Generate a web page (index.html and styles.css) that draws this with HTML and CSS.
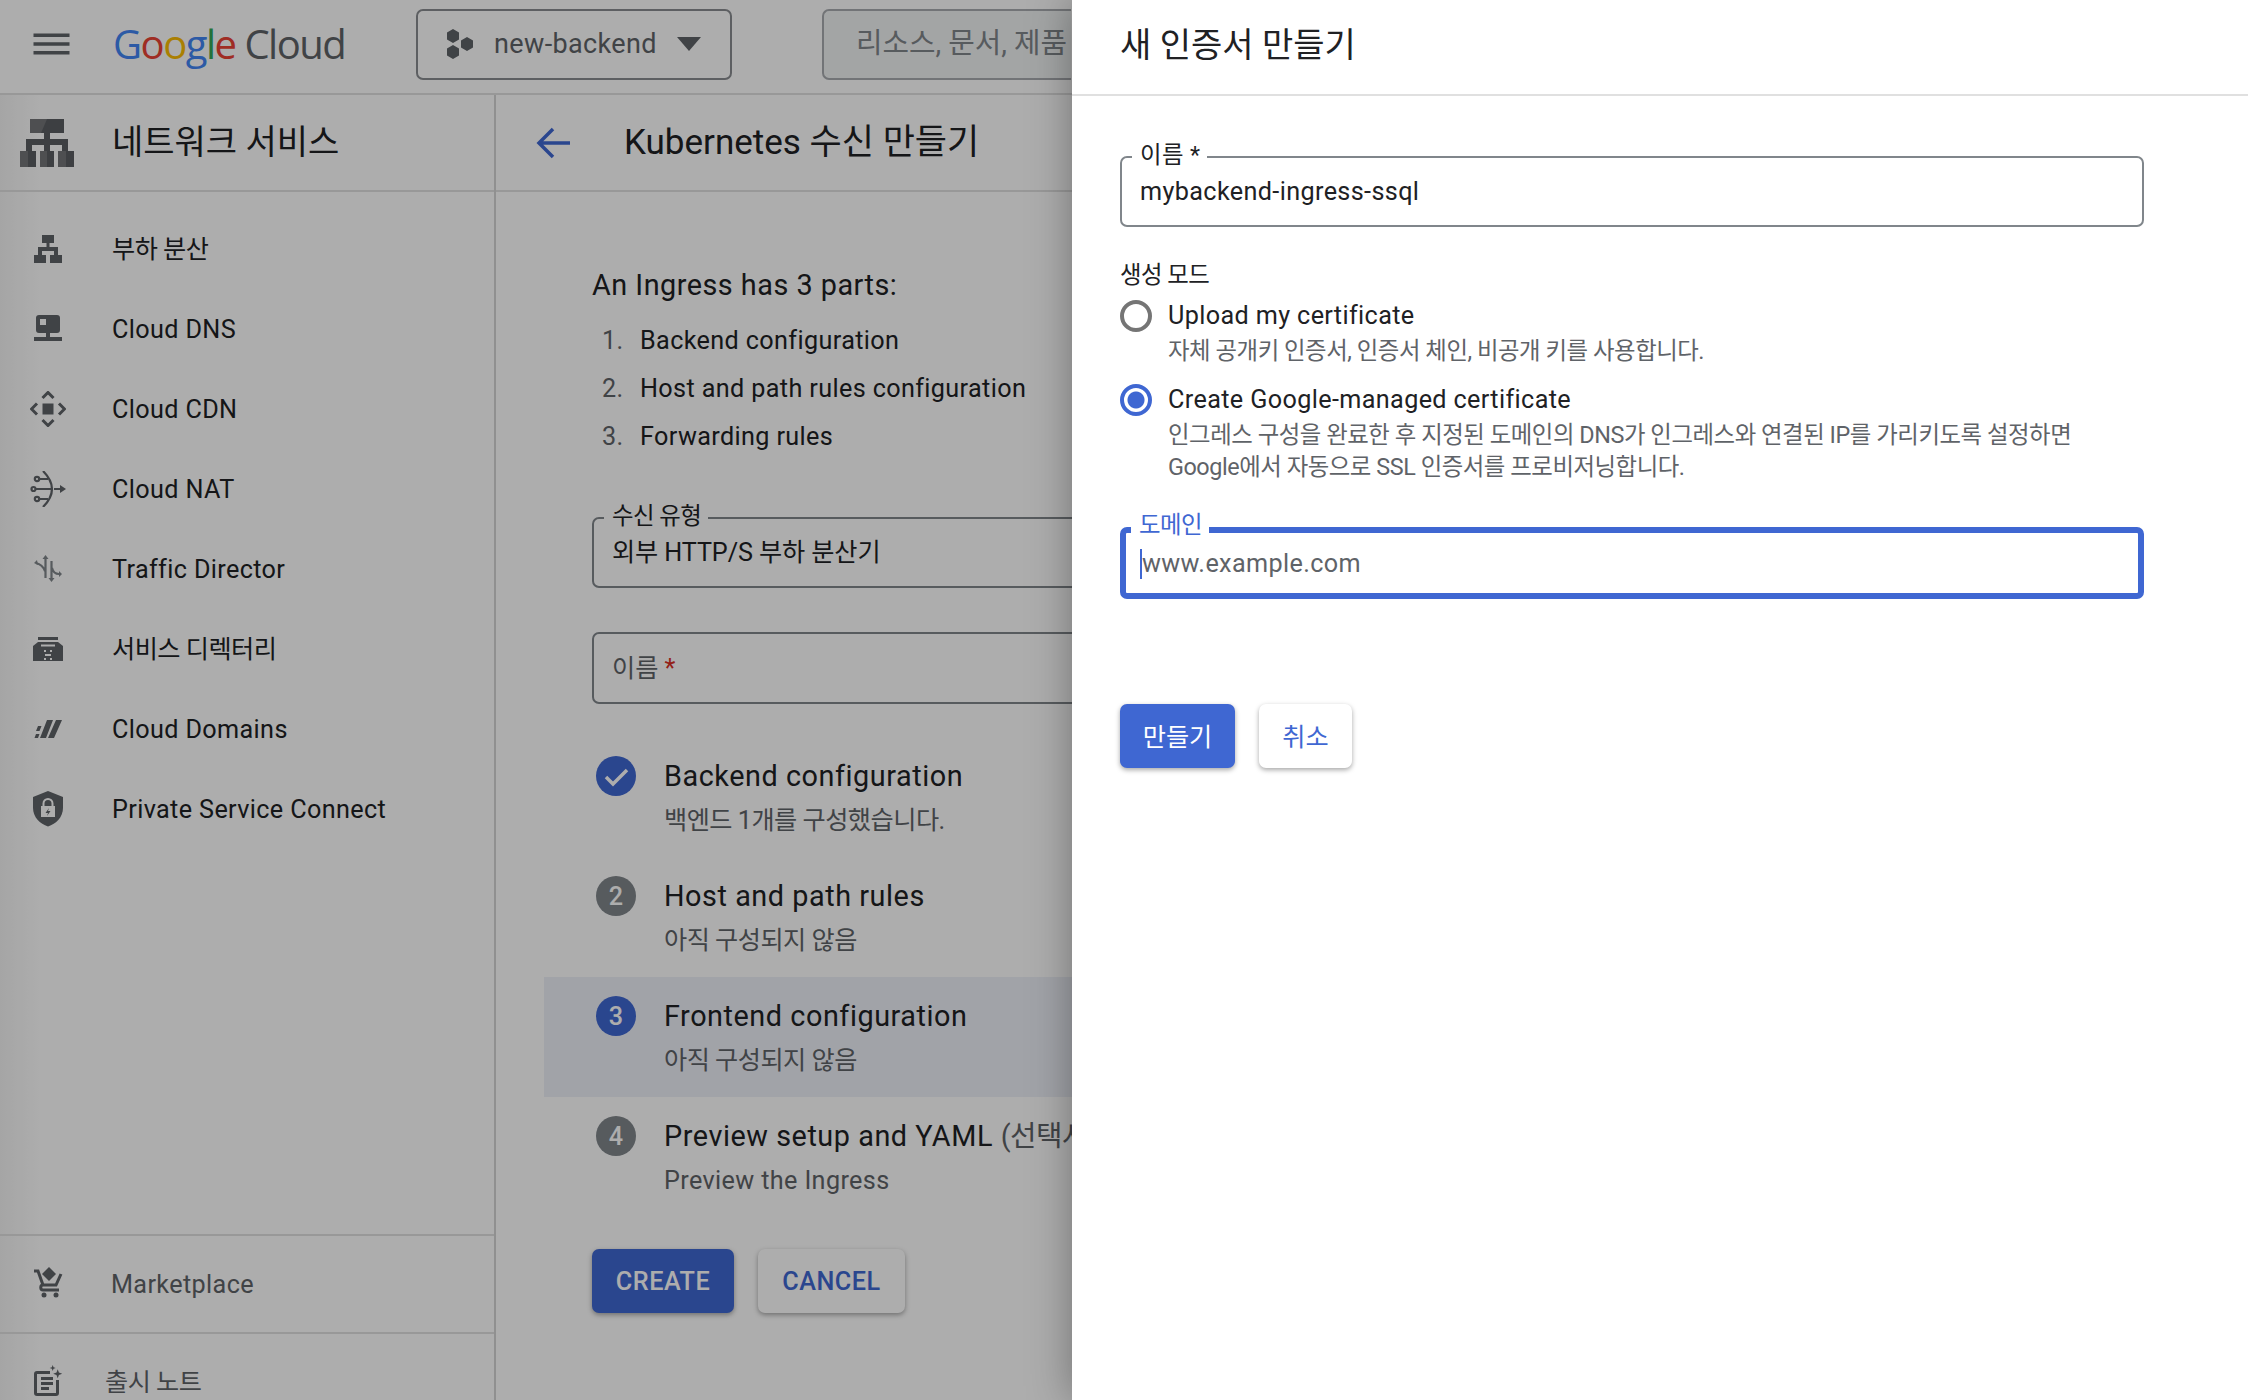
FILE: index.html
```html
<!DOCTYPE html>
<html lang="ko">
<head>
  <meta charset="UTF-8">
  <title>Kubernetes 수신 만들기</title>
  <link rel="stylesheet" href="styles.css">
</head>
<body>
  <div class="app">
    <header class="topbar">
      <svg class="menu-icon" viewBox="0 0 36 24"><path d="M0 1.500h36v3.400H0zM0 10.300h36v3.400H0zM0 19.100h36v3.400H0z"/></svg>
      <div class="logo"><span class="g-blue">G</span><span class="g-red">o</span><span class="g-yellow">o</span><span class="g-blue">g</span><span class="g-green">l</span><span class="g-red">e</span> <span class="logo-cloud">Cloud</span></div>
      <div class="project">
        <svg class="project-icon" viewBox="0 0 28 30"><path d="M7 0l6 3.500v7L7 14l-6-3.500v-7zM7 16l6 3.500v7L7 30l-6-3.500v-7zM21 8l6 3.500v7L21 22l-6-3.500v-7z"/></svg>
        <span>new-backend</span>
        <svg class="caret-down" viewBox="0 0 24 14"><path d="M0 0h24L12 14z"/></svg>
      </div>
      <div class="search">리소스, 문서, 제품</div>
    </header>

    <div class="workspace">
      <aside class="sidebar">
        <div class="sidebar-title">
          <svg class="title-icon" viewBox="0 0 54 48">
            <path class="tone-light" d="M10 0h17v14H10zM0 32h8v16H0zM20 32h7v16h-7zM38 32h8v16h-8z"/>
            <path class="tone-dark" d="M27 0h17v14H30v6h18v12h-6v-6H30v6h-6v-6H12v6H6V20h18v-6h-3zM8 32h8v16H8zM27 32h7v16h-7zM46 32h8v16h-8z"/>
          </svg>
          <span>네트워크 서비스</span>
        </div>
        <nav class="nav">
          <a class="nav-item">
            <svg class="nav-icon" viewBox="-4 -4 36 36"><path d="M8 0h12v8h-4.500v4H24v8h4v8H16v-8h4v-4H8v4h4v8H0v-8h4v-8h8.500V8H8z"/></svg>
            <span class="ko">부하 분산</span>
          </a>
          <a class="nav-item">
            <svg class="nav-icon" viewBox="-4 -2 36 36"><path d="M5 2h18a3 3 0 0 1 3 3v12a3 3 0 0 1-3 3h-7v4h12v4H0v-4h12v-4H5a3 3 0 0 1-3-3V5a3 3 0 0 1 3-3zm1 4v6h6V6z" fill-rule="evenodd"/></svg>
            <span>Cloud DNS</span>
          </a>
          <a class="nav-item">
            <svg class="nav-icon" viewBox="0 0 36 36"><path d="M12.500 12.500h11v11h-11z"/><path class="line line-heavy" d="M12.500 7L18 1.500 23.500 7M12.500 29l5.500 5.500 5.500-5.500M7 12.500L1.500 18 7 23.500M29 12.500l5.500 5.500-5.500 5.500"/></svg>
            <span>Cloud CDN</span>
          </a>
          <a class="nav-item">
            <svg class="nav-icon" viewBox="0 0 36 36"><path class="line" d="M13 0Q31 18 13 36M9.500 8H18M5.500 18H22M9.500 28H18M24 18h8"/><circle class="line" cx="7" cy="8" r="2.200"/><circle class="line" cx="3.500" cy="18" r="2"/><circle class="line" cx="7" cy="28" r="2.200"/><path d="M30 14l6 4-6 4z"/></svg>
            <span>Cloud NAT</span>
          </a>
          <a class="nav-item">
            <svg class="nav-icon nav-icon-soft" viewBox="-4 -4 36 36"><path class="line" d="M11.500 3v20M17.500 6v18M11 16C9 11 6 9 2 8M18 13c1 4 4 6 7 6"/><path d="M8.500 4l3-4 3 4zM14.500 23l3 4 3-4zM0 8l3-3 1 5zM25 16l3 3-3 3z"/></svg>
            <span>Traffic Director</span>
          </a>
          <a class="nav-item">
            <svg class="nav-icon" viewBox="-3 -6 36 36"><path d="M5 0h20v3H5zM5 5h20l5 4v15H0V9z"/><path class="cut" d="M8 8.500h14M11 14h2M17 14h2M12 18h6M11 22h2M17 22h2"/></svg>
            <span class="ko">서비스 디렉터리</span>
          </a>
          <a class="nav-item">
            <svg class="nav-icon" viewBox="0 0 36 36"><path d="M17 9h6l-7 18h-6zM26 9h6l-8 18h-6zM8 15h3.500L9.500 20H6zM6 23h3.500L8 27H4.500z"/></svg>
            <span>Cloud Domains</span>
          </a>
          <a class="nav-item">
            <svg class="nav-icon" viewBox="0 0 36 36"><path d="M18 0l15 6v11c0 9-7 16-15 18.500C10 33 3 26 3 17V6z"/><path class="cut-fill" d="M11 15h14v11H11z"/><path class="cut" d="M13.500 15v-2.500a4.500 4.500 0 0 1 9 0V15"/><path d="M19 17l-3.500 5H18l-1 3 3.500-5H18z"/></svg>
            <span>Private Service Connect</span>
          </a>
        </nav>
        <div class="sidebar-foot">
          <a class="foot-item">
            <svg class="nav-icon" viewBox="0 0 36 36"><path d="M19 1l7 7-7 7-7-7z"/><path class="line line-heavy" d="M4 5h4l5 14h13l5-11M13 19c-3 0-3 5 0 5h16"/><circle cx="14" cy="29" r="2.500"/><circle cx="26" cy="29" r="2.500"/></svg>
            <span>Marketplace</span>
          </a>
          <a class="foot-item foot-release">
            <svg class="nav-icon" viewBox="0 0 36 36"><path class="line line-heavy" d="M20 8.500H7A1.500 1.500 0 0 0 5.500 10v19A1.500 1.500 0 0 0 7 30.500h19a1.500 1.500 0 0 0 1.500-1.500V16"/><path d="M11 13h12v3H11zM11 18h12v3H11zM11 23h8v3h-8zM27.700 5.200l1.200 3.300 3.300 1.200-3.300 1.200-1.200 3.300-1.200-3.300-3.300-1.200 3.300-1.200zM22.700 1l.8 2.200 2.200.8-2.200.8-.8 2.200-.8-2.200-2.200-.8 2.200-.8z"/></svg>
            <span class="ko">출시 노트</span>
          </a>
        </div>
      </aside>

      <main class="main">
        <div class="page-title">
          <svg class="back-icon" viewBox="0 0 34 32"><path d="M17 2L3 16l14 14M3 16h31"/></svg>
          <h1>Kubernetes 수신 만들기</h1>
        </div>
        <div class="content">
          <p class="intro">An Ingress has 3 parts:</p>
          <ol class="parts">
            <li>Backend configuration</li>
            <li>Host and path rules configuration</li>
            <li>Forwarding rules</li>
          </ol>

          <div class="field field-type">
            <label class="field-label ko">수신 유형</label>
            <div class="field-value field-mixed">외부 HTTP/S 부하 분산기</div>
          </div>
          <div class="field field-name">
            <div class="field-value field-muted">이름 <span class="required">*</span></div>
          </div>

          <div class="steps">
            <div class="step">
              <svg class="step-badge" viewBox="0 0 40 40"><circle cx="20" cy="20" r="20" fill="#3f67d2"/><path d="M10 21l7 7 14-14" fill="none" stroke="#fff" stroke-width="3.500"/></svg>
              <div>
                <div class="step-title">Backend configuration</div>
                <div class="step-sub ko">백엔드 1개를 구성했습니다.</div>
              </div>
            </div>
            <div class="step">
              <span class="step-badge step-num">2</span>
              <div>
                <div class="step-title">Host and path rules</div>
                <div class="step-sub ko">아직 구성되지 않음</div>
              </div>
            </div>
            <div class="step step-active">
              <span class="step-badge step-num step-num-active">3</span>
              <div>
                <div class="step-title">Frontend configuration</div>
                <div class="step-sub ko">아직 구성되지 않음</div>
              </div>
            </div>
            <div class="step">
              <span class="step-badge step-num">4</span>
              <div>
                <div class="step-title">Preview setup and YAML <span class="optional ko">(선택사항)</span></div>
                <div class="step-sub">Preview the Ingress</div>
              </div>
            </div>
          </div>

          <div class="actions">
            <button class="btn btn-primary btn-create">CREATE</button>
            <button class="btn btn-plain btn-cancel">CANCEL</button>
          </div>
        </div>
      </main>
    </div>

    <div class="backdrop"></div>

    <section class="panel">
      <div class="panel-head">새 인증서 만들기</div>
      <div class="panel-body">
        <div class="field field-cert">
          <label class="field-label">이름 *</label>
          <div class="field-value">mybackend-ingress-ssql</div>
        </div>

        <div class="group-label ko">생성 모드</div>
        <div class="radio-row">
          <span class="radio"></span>
          <span class="radio-text">Upload my certificate</span>
          <p class="radio-desc">자체 공개키 인증서, 인증서 체인, 비공개 키를 사용합니다.</p>
        </div>
        <div class="radio-row radio-row-on">
          <span class="radio radio-on"></span>
          <span class="radio-text">Create Google-managed certificate</span>
          <p class="radio-desc">인그레스 구성을 완료한 후 지정된 도메인의 DNS가 인그레스와 연결된 IP를 가리키도록 설정하면<br>Google에서 자동으로 SSL 인증서를 프로비저닝합니다.</p>
        </div>

        <div class="field field-focus">
          <label class="field-label ko">도메인</label>
          <div class="field-value"><span class="placeholder">www.example.com</span></div>
        </div>

        <div class="actions panel-actions">
          <button class="btn btn-primary btn-make">만들기</button>
          <button class="btn btn-plain btn-abort">취소</button>
        </div>
      </div>
    </section>
  </div>
</body>
</html>
```

FILE: styles.css
```css
* {
  box-sizing: border-box;
}

html, body {
  margin: 0;
  height: 100%;
}

body {
  font-family: Roboto, "Noto Sans CJK KR", sans-serif;
  font-size: 25.2px;
  line-height: 40px;
  letter-spacing: 0.37px;
  color: #202124;
  background: #fff;
}

.ko {
  letter-spacing: -0.5px;
}

.app {
  position: relative;
  width: 2248px;
  height: 1400px;
  overflow: hidden;
}

/* top bar */
.topbar {
  display: flex;
  align-items: center;
  height: 95px;
  border-bottom: 2px solid #e0e0e0;
  padding: 0 0 5px 33px;
}

.menu-icon {
  width: 37px;
  height: 24px;
  fill: #5f6368;
  margin-right: 44px;
}

.logo {
  width: 303px;
  margin-left: -1px;
  padding-left: 0;
  font-family: "Open Sans", sans-serif;
  font-size: 40px;
  line-height: 50px;
  letter-spacing: -1.5px;
  white-space: nowrap;
}

.g-blue { color: #4285f4; }
.g-red { color: #ea4335; }
.g-yellow { color: #fbbc04; }
.g-green { color: #34a853; }
.logo-cloud { color: #5f6368; }

.project {
  display: flex;
  align-items: center;
  width: 316px;
  height: 71px;
  border: 2px solid #8a8d91;
  border-radius: 7px;
  padding-left: 28px;
  font-size: 27px;
  color: #5f6368;
}

.project-icon {
  width: 28px;
  height: 30px;
  fill: #5f6368;
  margin-right: 20px;
}

.caret-down {
  width: 24px;
  height: 14px;
  fill: #5f6368;
  margin-left: 20px;
}

.search {
  width: 249px;
  height: 71px;
  margin-left: 90px;
  border: 2px solid #a9acb0;
  border-right: 0;
  border-radius: 7px 0 0 7px;
  background: #f1f3f4;
  padding-left: 32px;
  font-size: 28.8px;
  line-height: 65px;
  letter-spacing: 0;
  color: #80868b;
  white-space: nowrap;
  overflow: hidden;
}

.workspace {
  display: flex;
  height: 1305px;
}

/* left nav */
.sidebar {
  width: 496px;
  flex-shrink: 0;
  border-right: 2px solid #d5d5d5;
  background: linear-gradient(90deg, #f4f4f4, #fff 40px);
}

.sidebar-title {
  display: flex;
  align-items: center;
  height: 97px;
  border-bottom: 2px solid #e0e0e0;
  padding-left: 20px;
  font-size: 34px;
  letter-spacing: 0;
}

.sidebar-title span {
  padding-bottom: 2px;
}

.title-icon {
  width: 54px;
  height: 48px;
  margin-right: 38px;
}

.tone-light { fill: #737578; }
.tone-dark { fill: #5b5e62; }

.nav {
  padding-top: 17px;
}

.nav-item {
  display: flex;
  align-items: center;
  height: 80px;
  color: #202124;
}

.nav-item span,
.foot-item span {
  padding-top: 2px;
}

.nav-icon {
  width: 36px;
  height: 36px;
  margin: 0 46px 0 30px;
  fill: #5f6368;
  flex-shrink: 0;
}

.nav-icon .line {
  fill: none;
  stroke: #5f6368;
  stroke-width: 2.2;
}

.nav-icon .line-heavy {
  stroke-width: 3;
}

.nav-icon-soft {
  fill: #80868b;
}

.nav-icon-soft .line {
  stroke: #80868b;
}

.nav-icon .cut {
  fill: none;
  stroke: #fff;
  stroke-width: 2;
}

.nav-icon .cut-fill {
  fill: #fff;
}

.sidebar-foot {
  margin-top: 385px;
}

.foot-item {
  display: flex;
  align-items: center;
  height: 98px;
  border-top: 2px solid #e0e0e0;
  color: #5f6368;
}

.foot-item .nav-icon {
  margin-right: 45px;
}

.foot-release .nav-icon {
  margin-right: 39px;
}

/* create ingress page */
.main {
  flex: 1;
}

.page-title {
  display: flex;
  align-items: center;
  height: 97px;
  border-bottom: 2px solid #e0e0e0;
  padding-left: 40px;
}

.back-icon {
  width: 34px;
  height: 32px;
  fill: none;
  stroke: #3f67d2;
  stroke-width: 3.5;
  margin-right: 54px;
}

.page-title h1 {
  margin: 0;
  font-size: 35px;
  font-weight: 400;
  letter-spacing: 0;
}

.content {
  padding: 73px 0 0 96px;
}

.intro {
  margin: 0;
  font-size: 28.8px;
  line-height: 40px;
  letter-spacing: 0.5px;
}

.parts {
  margin: 12px 0 0;
  padding: 0;
  list-style: none;
  counter-reset: part;
  line-height: 48px;
}

.parts li {
  display: flex;
  padding-left: 10px;
  counter-increment: part;
}

.parts li::before {
  content: counter(part) ".";
  width: 38px;
  color: #5f6368;
}

.field {
  position: relative;
  height: 71px;
  border: 2px solid #80868b;
  border-radius: 7px;
}

.field-label {
  position: absolute;
  top: -18px;
  left: 10px;
  padding: 0 7px 0 8px;
  background: #fff;
  font-size: 23.4px;
  line-height: 30px;
  white-space: nowrap;
}

.field-value {
  padding-left: 18px;
  line-height: 67px;
}

.field-mixed {
  letter-spacing: -0.1px;
}

.field-muted {
  padding-top: 1px;
  color: #5f6368;
  letter-spacing: 0;
}

.required {
  color: #d93025;
}

.field-type {
  margin-top: 56px;
}

.field-name {
  height: 72px;
  margin-top: 44px;
}

.steps {
  margin: 33px 0 0 -48px;
}

.step {
  display: flex;
  height: 120px;
  padding: 19px 0 0 52px;
}

.step-active {
  background: #eef0f8;
}

.step-badge {
  width: 40px;
  height: 40px;
  flex-shrink: 0;
  margin-right: 28px;
}

.step-num {
  border-radius: 50%;
  background: #80868b;
  color: #fff;
  font-weight: 500;
  text-align: center;
  line-height: 41px;
  letter-spacing: 0;
}

.step-num-active {
  background: #3f67d2;
}

.step-title {
  font-size: 28.8px;
  line-height: 40px;
  letter-spacing: 0.55px;
  white-space: nowrap;
}

.optional {
  color: #5f6368;
}

.step-sub {
  margin-top: 5px;
  color: #5f6368;
  line-height: 40px;
  white-space: nowrap;
}

.actions {
  display: flex;
  gap: 24px;
  margin-top: 32px;
}

.btn {
  height: 64px;
  border: none;
  border-radius: 7px;
  font-family: inherit;
  font-size: 25.2px;
  letter-spacing: 0.5px;
  box-shadow: 0 2px 5px rgba(0, 0, 0, 0.35);
}

.btn-primary {
  background: #3f67d2;
  color: #fff;
}

.btn-plain {
  background: #fff;
  color: #3f67d2;
}

.btn-create { width: 142px; font-weight: 500; }
.btn-cancel { width: 147px; font-weight: 500; }
.btn-make { width: 115px; padding-bottom: 3px; letter-spacing: 0; }
.btn-abort { width: 93px; padding-bottom: 3px; letter-spacing: 0; }

/* dim layer and slide-over panel */
.backdrop {
  position: absolute;
  inset: 0;
  background: rgba(0, 0, 0, 0.32);
}

.panel {
  position: absolute;
  top: 0;
  right: 0;
  width: 1176px;
  height: 1400px;
  background: #fff;
  box-shadow: 0 0 40px rgba(0, 0, 0, 0.35);
}

.panel-head {
  height: 96px;
  border-bottom: 2px solid #e0e0e0;
  padding-left: 48px;
  font-size: 34px;
  letter-spacing: 0;
  line-height: 90px;
}

.panel-body {
  padding: 60px 104px 0 48px;
}

.group-label {
  margin-top: 32px;
  font-size: 23.4px;
  line-height: 32px;
}

.radio-row {
  display: grid;
  grid-template-columns: 32px 1fr;
  column-gap: 16px;
  align-items: center;
  margin-top: 7px;
}

.radio-row-on {
  margin-top: 15px;
}

.radio {
  width: 32px;
  height: 32px;
  border: 4px solid #757575;
  border-radius: 50%;
}

.radio-on {
  border-color: #3f67d2;
  background: radial-gradient(circle, #3f67d2 0 8px, #fff 9px);
}

.radio-text {
  line-height: 36px;
  white-space: nowrap;
}

.radio-desc {
  grid-column: 2;
  margin: 1px 0 0;
  font-size: 23.4px;
  line-height: 32px;
  letter-spacing: -0.45px;
  color: #5f6368;
}

.field-focus {
  height: 72px;
  margin-top: 44px;
  border: 6px solid #3f67d2;
}

.field-focus .field-label {
  top: -23px;
  left: 5px;
  color: #3f67d2;
}

.field-focus .field-value {
  padding: 3px 0 0 14px;
  line-height: 56px;
}

.placeholder {
  display: inline-block;
  border-left: 2px solid #3f67d2;
  line-height: 30px;
  color: #5f6368;
}

.panel-actions {
  margin-top: 105px;
}
```
